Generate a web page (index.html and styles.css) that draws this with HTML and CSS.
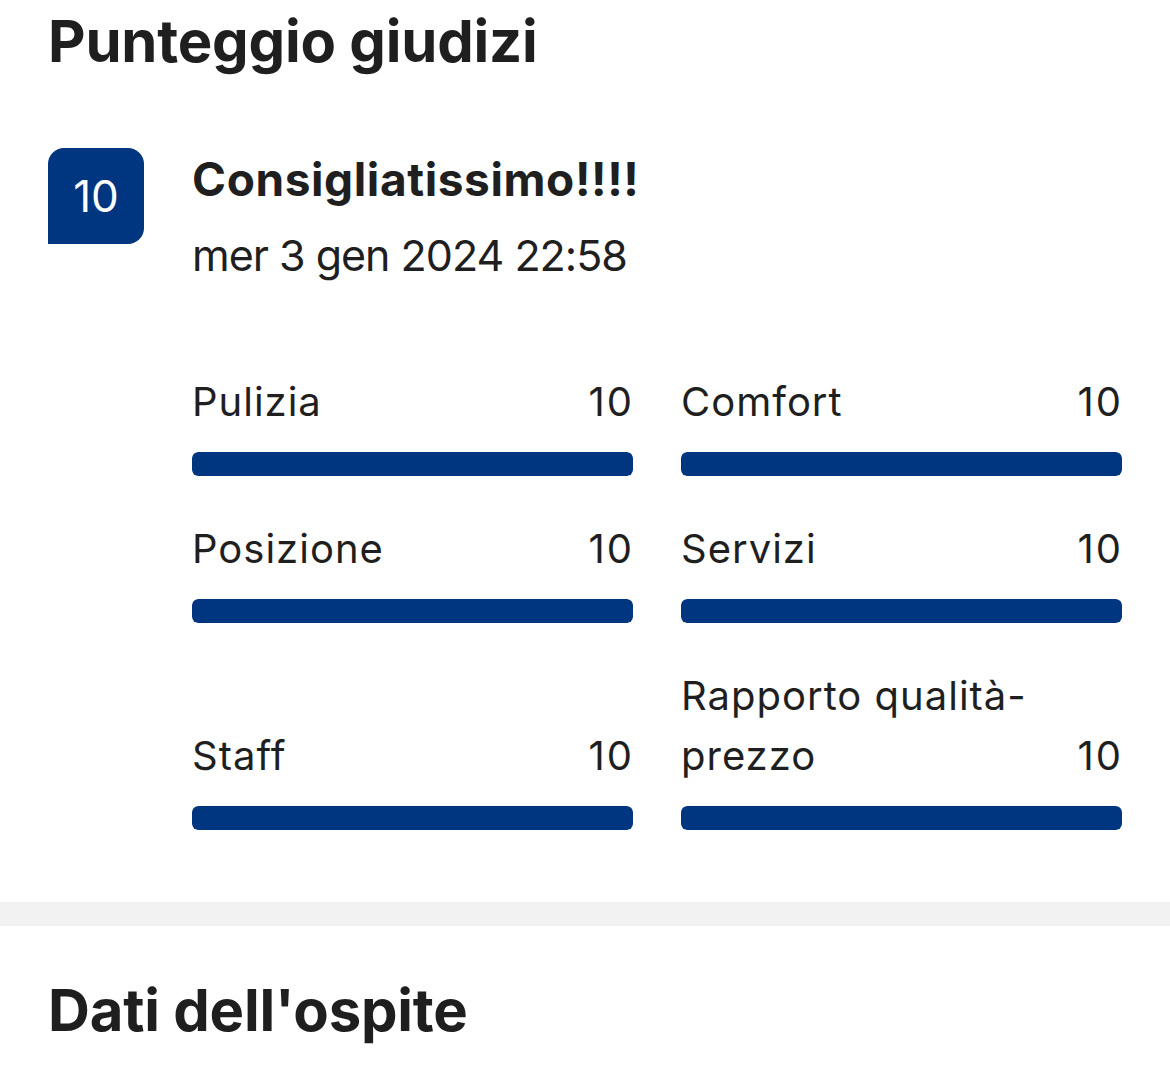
FILE: index.html
```html
<!DOCTYPE html>
<html lang="it">
<head>
<meta charset="utf-8">
<title>Punteggio giudizi</title>
<link rel="stylesheet" href="styles.css">
</head>
<body>
<section class="section">
  <h1 class="section-title">Punteggio giudizi</h1>
  <div class="review">
    <div class="badge">10</div>
    <div class="review-body">
      <h2 class="review-title">Consigliatissimo!!!!</h2>
      <p class="review-date">mer 3 gen 2024 22:58</p>
      <div class="scores">
        <div class="score">
          <div class="score-head"><span class="score-label">Pulizia</span><span class="score-value">10</span></div>
          <div class="bar"><div class="bar-fill" style="width:100%"></div></div>
        </div>
        <div class="score">
          <div class="score-head"><span class="score-label">Comfort</span><span class="score-value">10</span></div>
          <div class="bar"><div class="bar-fill" style="width:100%"></div></div>
        </div>
        <div class="score">
          <div class="score-head"><span class="score-label">Posizione</span><span class="score-value">10</span></div>
          <div class="bar"><div class="bar-fill" style="width:100%"></div></div>
        </div>
        <div class="score">
          <div class="score-head"><span class="score-label">Servizi</span><span class="score-value">10</span></div>
          <div class="bar"><div class="bar-fill" style="width:100%"></div></div>
        </div>
        <div class="score">
          <div class="score-head"><span class="score-label">Staff</span><span class="score-value">10</span></div>
          <div class="bar"><div class="bar-fill" style="width:100%"></div></div>
        </div>
        <div class="score">
          <div class="score-head"><span class="score-label">Rapporto qualità-prezzo</span><span class="score-value">10</span></div>
          <div class="bar"><div class="bar-fill" style="width:100%"></div></div>
        </div>
      </div>
    </div>
  </div>
</section>
<div class="divider"></div>
<section class="section section-guest">
  <h1 class="section-title">Dati dell'ospite</h1>
</section>
</body>
</html>
```

FILE: styles.css
```css
* { box-sizing: border-box; }
html, body { margin: 0; padding: 0; background: #ffffff; }
body {
  font-family: Inter, "Noto Sans", "Liberation Sans", sans-serif;
  color: #1f1f1f;
}
.section {
  padding: 6px 48px 0 48px;
}
.section-title {
  margin: 0;
  font-size: 58px;
  line-height: 70px;
  font-weight: 700;
  letter-spacing: -0.2px;
  color: #1f1f1f;
}
.review {
  display: flex;
  gap: 48px;
  margin-top: 72px;
}
.badge {
  flex: 0 0 96px;
  width: 96px;
  height: 96px;
  background: #003580;
  color: #ffffff;
  border-radius: 16px 16px 16px 0;
  display: flex;
  align-items: center;
  justify-content: center;
  font-size: 44px;
  font-weight: 400;
}
.review-body {
  flex: 1;
  padding-top: 4px;
}
.review-title {
  margin: 0;
  font-size: 46px;
  line-height: 54px;
  font-weight: 700;
  letter-spacing: 0.6px;
  color: #1f1f1f;
}
.review-date {
  margin: 22px 0 0 0;
  font-size: 43px;
  line-height: 54px;
  font-weight: 400;
  letter-spacing: -1px;
  color: #1f1f1f;
}
.scores {
  margin-top: 90px;
  display: grid;
  grid-template-columns: 1fr 1fr;
  column-gap: 48px;
  row-gap: 43px;
}
.score {
  display: flex;
  flex-direction: column;
}
.score-head {
  flex: 1;
  display: flex;
  justify-content: space-between;
  align-items: flex-end;
  gap: 24px;
  font-size: 40px;
  line-height: 60px;
  letter-spacing: 1px;
  color: #1f1f1f;
}
.score-label { max-width: 380px; }
.score-value {
  flex: 0 0 auto;
  letter-spacing: 2px;
  margin-right: -1px;
}
.bar {
  margin-top: 20px;
  height: 24px;
  border-radius: 6px;
  background: #e6e6e6;
  overflow: hidden;
}
.bar-fill {
  height: 100%;
  background: #003580;
  border-radius: 6px;
}
.divider {
  margin-top: 72px;
  height: 24px;
  background: #f2f2f2;
}
.section-guest {
  padding-top: 49px;
}
```
